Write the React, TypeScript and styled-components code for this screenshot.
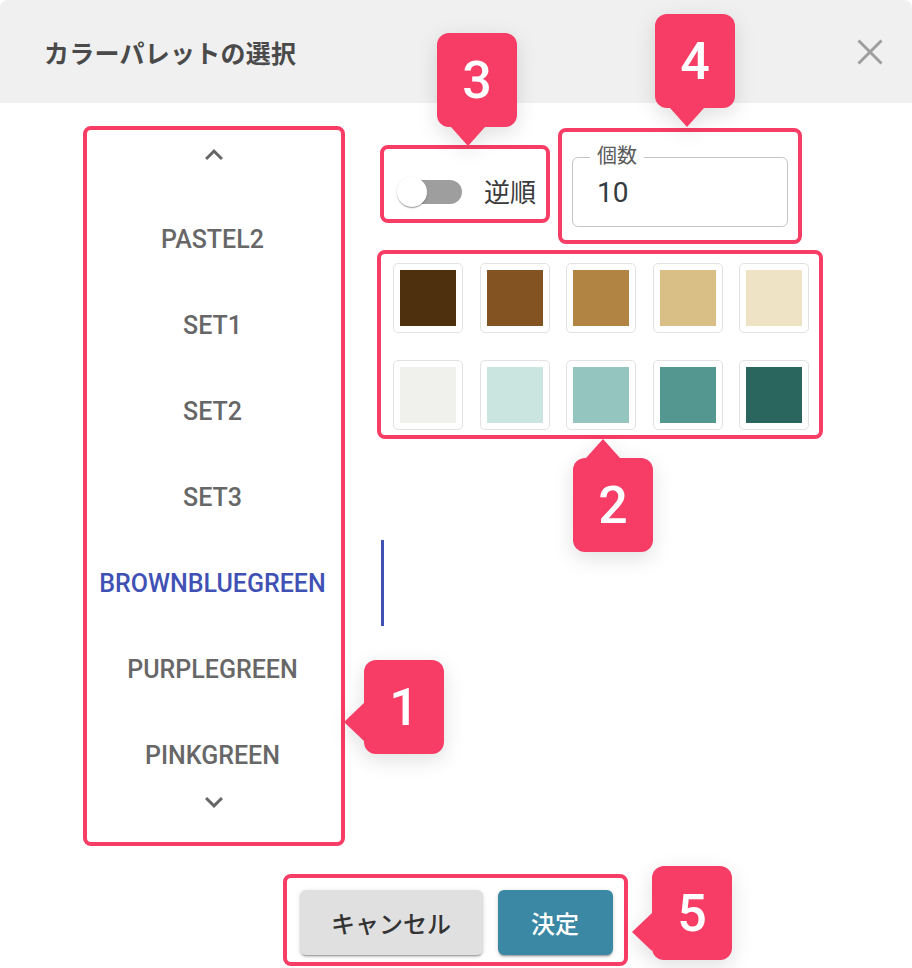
import React from "react";
import styled, { createGlobalStyle, css } from "styled-components";

const GlobalStyle = createGlobalStyle`
  html, body {
    margin: 0;
    padding: 0;
    background: #ffffff;
  }
  body {
    font-family: "Roboto", "Noto Sans CJK JP", sans-serif;
  }
`;

const ACCENT = "#f73c65";
const BLUE = "#3f51b5";

const palettes = [
  "PASTEL2",
  "SET1",
  "SET2",
  "SET3",
  "BROWNBLUEGREEN",
  "PURPLEGREEN",
  "PINKGREEN",
];

const swatches = [
  "#4f300e",
  "#835421",
  "#b28444",
  "#d9bf86",
  "#eee3c4",
  "#f0f0ec",
  "#cae4df",
  "#94c5bf",
  "#539790",
  "#2b665e",
];

export default function App() {
  return (
    <>
      <GlobalStyle />
      <Dialog>
        <Header>
          <Title>カラーパレットの選択</Title>
          <CloseButton aria-label="close">
            <svg width="26" height="26" viewBox="0 0 26 26">
              <path d="M1.5 1.5 24.5 24.5M24.5 1.5 1.5 24.5" stroke="#9e9e9e" strokeWidth="3" />
            </svg>
          </CloseButton>
        </Header>

        <Body>
          <TabsColumn>
            <ScrollButton>
              <Chevron />
            </ScrollButton>
            <TabViewport>
              {palettes.map((name) => (
                <Tab key={name} $active={name === "BROWNBLUEGREEN"}>
                  {name}
                </Tab>
              ))}
            </TabViewport>
            <ScrollButton $down>
              <Chevron $down />
            </ScrollButton>
          </TabsColumn>

          <Panel>
            <OptionsRow>
              <SwitchLabel>
                <SwitchTrack>
                  <SwitchThumb />
                </SwitchTrack>
                <SwitchText>逆順</SwitchText>
              </SwitchLabel>
              <CountField>
                <CountLegend>個数</CountLegend>
                <CountValue>10</CountValue>
              </CountField>
            </OptionsRow>

            <SwatchGrid>
              {swatches.map((c) => (
                <Swatch key={c}>
                  <SwatchColor $color={c} />
                </Swatch>
              ))}
            </SwatchGrid>
          </Panel>
        </Body>

        <Footer>
          <ActionButton>キャンセル</ActionButton>
          <ActionButton $primary>決定</ActionButton>
        </Footer>

        {/* annotation overlay */}
        <Highlight $x={83} $y={126} $w={262} $h={720} />
        <Highlight $x={380} $y={145} $w={170} $h={78} />
        <Highlight $x={558} $y={128} $w={244} $h={116} />
        <Highlight $x={377} $y={250} $w={446} $h={189} />
        <Highlight $x={283} $y={874} $w={345} $h={92} />

        <Callout $x={364} $y={660} $dir="left" $offset={62}>1</Callout>
        <Callout $x={573} $y={458} $dir="up" $offset={30}>2</Callout>
        <Callout $x={437} $y={33} $dir="down" $offset={31}>3</Callout>
        <Callout $x={655} $y={14} $dir="down" $offset={32}>4</Callout>
        <Callout $x={652} $y={866} $dir="left" $offset={66}>5</Callout>
      </Dialog>
    </>
  );
}

const Chevron = ({ $down }: { $down?: boolean }) => (
  <svg width="36" height="36" viewBox="0 0 24 24" style={$down ? { transform: "rotate(180deg)" } : undefined}>
    <path d="M7.41 15.41 12 10.83l4.59 4.58L18 14l-6-6-6 6z" fill="#666666" />
  </svg>
);

const Dialog = styled.div`
  position: relative;
  width: 912px;
  height: 968px;
  display: flex;
  flex-direction: column;
  background: #ffffff;
  border-radius: 8px 8px 0 0;
  overflow: hidden;
`;

const Header = styled.div`
  height: 103px;
  flex-shrink: 0;
  display: flex;
  align-items: center;
  justify-content: space-between;
  padding: 0 29px 0 44px;
  background: #f0f0f0;
`;

const Title = styled.h2`
  margin: 0;
  font-size: 25px;
  font-weight: 700;
  color: #4a4a4a;
  letter-spacing: 0.01em;
`;

const CloseButton = styled.button`
  border: 0;
  background: none;
  padding: 0;
  display: flex;
  cursor: pointer;
`;

const Body = styled.div`
  flex: 1;
  display: flex;
  padding-top: 27px;
`;

const TabsColumn = styled.div`
  width: 340px;
  margin-left: 44px;
  display: flex;
  flex-direction: column;
  align-self: flex-start;
`;

const ScrollButton = styled.div<{ $down?: boolean }>`
  height: ${(p) => (p.$down ? 44 : 50)}px;
  display: flex;
  align-items: center;
  justify-content: center;
`;

const TabViewport = styled.div`
  height: 600px;
  padding-top: 16px;
  box-sizing: border-box;
  overflow: hidden;
  display: flex;
  flex-direction: column;
`;

const Tab = styled.div<{ $active?: boolean }>`
  flex-shrink: 0;
  height: 86px;
  display: flex;
  align-items: center;
  justify-content: center;
  font-size: 25px;
  font-weight: 500;
  color: ${(p) => (p.$active ? BLUE : "#676767")};
  border-right: 3px solid ${(p) => (p.$active ? BLUE : "transparent")};
`;

const Panel = styled.div`
  display: flex;
  flex-direction: column;
  margin-left: 8px;
  padding-top: 27px;
`;

const OptionsRow = styled.div`
  display: flex;
  align-items: center;
  height: 70px;
`;

const SwitchLabel = styled.label`
  display: flex;
  align-items: center;
`;

const SwitchTrack = styled.span`
  width: 62px;
  height: 24px;
  margin-left: 8px;
  border-radius: 12px;
  background: #9e9e9e;
  display: flex;
  align-items: center;
`;

const SwitchThumb = styled.span`
  width: 30px;
  height: 30px;
  margin-left: -3px;
  border-radius: 50%;
  background: #ffffff;
  box-shadow: 0 2px 1px -1px rgba(0, 0, 0, 0.2), 0 1px 1px rgba(0, 0, 0, 0.14),
    0 1px 3px rgba(0, 0, 0, 0.12);
`;

const SwitchText = styled.span`
  margin-left: 22px;
  font-size: 26px;
  color: #3a3a3a;
  margin-top: -4px;
`;

const CountField = styled.div`
  position: relative;
  width: 216px;
  height: 70px;
  margin-left: 36px;
  box-sizing: border-box;
  border: 1px solid #c4c4c4;
  border-radius: 6px;
  display: flex;
  align-items: center;
  padding-left: 24px;
`;

const CountLegend = styled.span`
  position: absolute;
  left: 17px;
  top: -14px;
  padding: 0 7px;
  background: #ffffff;
  font-size: 20px;
  line-height: 24px;
  color: #5a5a5a;
`;

const CountValue = styled.span`
  font-size: 28px;
  color: #333a40;
`;

const SwatchGrid = styled.div`
  display: grid;
  grid-template-columns: repeat(5, 70px);
  column-gap: 16.5px;
  row-gap: 27px;
  margin: 36px 0 0 1px;
`;

const Swatch = styled.div`
  width: 70px;
  height: 70px;
  box-sizing: border-box;
  padding: 6px;
  border: 1px solid #e2e2e2;
  border-radius: 5px;
  background: #ffffff;
`;

const SwatchColor = styled.div<{ $color: string }>`
  width: 100%;
  height: 100%;
  background: ${(p) => p.$color};
`;

const Footer = styled.div`
  flex-shrink: 0;
  display: flex;
  justify-content: center;
  gap: 15px;
  padding-bottom: 13px;
`;

const ActionButton = styled.button<{ $primary?: boolean }>`
  height: 65px;
  padding: 0 ${(p) => (p.$primary ? 33 : 30)}px;
  min-width: ${(p) => (p.$primary ? 115 : 183)}px;
  border: 0;
  border-radius: 6px;
  font-family: "Roboto", "Noto Sans CJK JP", sans-serif;
  font-size: 24px;
  font-weight: 500;
  background: ${(p) => (p.$primary ? "#3b88a4" : "#e0e0e0")};
  color: ${(p) => (p.$primary ? "#ffffff" : "#333333")};
  box-shadow: 0 3px 1px -2px rgba(0, 0, 0, 0.2), 0 2px 2px rgba(0, 0, 0, 0.14),
    0 1px 5px rgba(0, 0, 0, 0.12);
`;

const Highlight = styled.div<{ $x: number; $y: number; $w: number; $h: number }>`
  position: absolute;
  left: ${(p) => p.$x}px;
  top: ${(p) => p.$y}px;
  width: ${(p) => p.$w}px;
  height: ${(p) => p.$h}px;
  box-sizing: border-box;
  border: 4px solid ${ACCENT};
  border-radius: 8px;
  pointer-events: none;
`;

type Dir = "up" | "down" | "left";

const pointer = (dir: Dir, offset: number) => {
  switch (dir) {
    case "down":
      return css`
        left: ${offset - 17}px;
        top: 100%;
        border-left: 17px solid transparent;
        border-right: 17px solid transparent;
        border-top: 19px solid ${ACCENT};
      `;
    case "up":
      return css`
        left: ${offset - 17}px;
        bottom: 100%;
        border-left: 17px solid transparent;
        border-right: 17px solid transparent;
        border-bottom: 19px solid ${ACCENT};
      `;
    case "left":
      return css`
        top: ${offset - 19}px;
        right: 100%;
        border-top: 19px solid transparent;
        border-bottom: 19px solid transparent;
        border-right: 20px solid ${ACCENT};
      `;
  }
};

const Callout = styled.div<{ $x: number; $y: number; $dir: Dir; $offset: number }>`
  position: absolute;
  left: ${(p) => p.$x}px;
  top: ${(p) => p.$y}px;
  width: 80px;
  height: 94px;
  border-radius: 12px;
  background: ${ACCENT};
  color: #ffffff;
  display: flex;
  align-items: center;
  justify-content: center;
  font-family: "Roboto", sans-serif;
  font-size: 52px;
  font-weight: 500;
  filter: drop-shadow(0 6px 10px rgba(0, 0, 0, 0.12));

  &::after {
    content: "";
    position: absolute;
    width: 0;
    height: 0;
    ${(p) => pointer(p.$dir, p.$offset)}
  }
`;
